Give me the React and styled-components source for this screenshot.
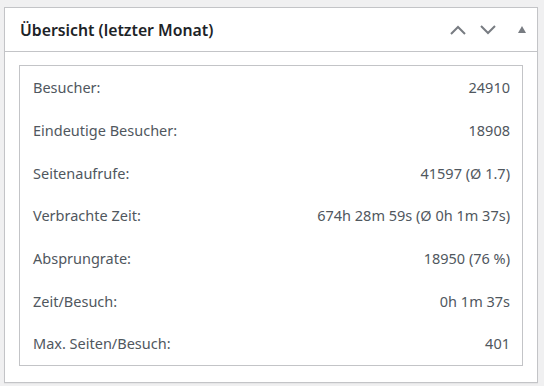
import React from "react";
import styled, { createGlobalStyle } from "styled-components";

const GlobalStyle = createGlobalStyle`
  html, body {
    margin: 0;
    padding: 0;
    background: #f0f0f1;
    font-family: "Noto Sans", "Open Sans", sans-serif;
  }
`;

const stats = [
  ["Besucher:", "24910"],
  ["Eindeutige Besucher:", "18908"],
  ["Seitenaufrufe:", "41597 (Ø 1.7)"],
  ["Verbrachte Zeit:", "674h 28m 59s (Ø 0h 1m 37s)"],
  ["Absprungrate:", "18950 (76 %)"],
  ["Zeit/Besuch:", "0h 1m 37s"],
  ["Max. Seiten/Besuch:", "401"],
];

export default function App() {
  return (
    <Page>
      <GlobalStyle />
      <Postbox>
        <Header>
          <Title>Übersicht (letzter Monat)</Title>
          <Actions>
            <IconButton aria-label="Nach oben verschieben">
              <svg width="18" height="12" viewBox="0 0 18 12">
                <path d="M2 10 L9 3 L16 10" fill="none" stroke="#787c82" strokeWidth="2" />
              </svg>
            </IconButton>
            <IconButton aria-label="Nach unten verschieben">
              <svg width="18" height="12" viewBox="0 0 18 12">
                <path d="M2 2 L9 9 L16 2" fill="none" stroke="#787c82" strokeWidth="2" />
              </svg>
            </IconButton>
            <Toggle aria-label="Bereich umschalten">
              <svg width="8" height="7" viewBox="0 0 8 7">
                <path d="M4 0 L8 7 L0 7 Z" fill="#787c82" />
              </svg>
            </Toggle>
          </Actions>
        </Header>
        <Inside>
          <StatsBox>
            {stats.map(([label, value]) => (
              <Row key={label}>
                <Label>{label}</Label>
                <Value>{value}</Value>
              </Row>
            ))}
          </StatsBox>
        </Inside>
      </Postbox>
    </Page>
  );
}

const Page = styled.div`
  padding: 7px 6px 5px 4px;
`;

const Postbox = styled.div`
  background: #fff;
  border: 1px solid #c3c4c7;
  box-shadow: 0 1px 1px rgba(0, 0, 0, 0.04);
`;

const Header = styled.div`
  display: flex;
  align-items: center;
  justify-content: space-between;
  height: 43px;
  border-bottom: 1px solid #c3c4c7;
  padding: 0 11px 0 15px;
`;

const Title = styled.h2`
  margin: 0;
  font-size: 15.8px;
  font-weight: 600;
  color: #1d2327;
`;

const Actions = styled.div`
  display: flex;
  align-items: center;
  gap: 12px;
`;

const IconButton = styled.span`
  display: flex;
  width: 18px;
  height: 12px;
`;

const Toggle = styled.span`
  display: flex;
  margin-left: 9px;
  width: 8px;
  height: 7px;
`;

const Inside = styled.div`
  padding: 13px 14px 16px 14px;
`;

const StatsBox = styled.div`
  border: 1px solid #c3c4c7;
  display: grid;
  grid-template-rows: repeat(7, 42.7px);
`;

const Row = styled.div`
  display: flex;
  align-items: center;
  justify-content: space-between;
  padding: 0 12px 0 13px;
  font-size: 14.5px;
  color: #50575e;
`;

const Label = styled.span``;

const Value = styled.span``;
